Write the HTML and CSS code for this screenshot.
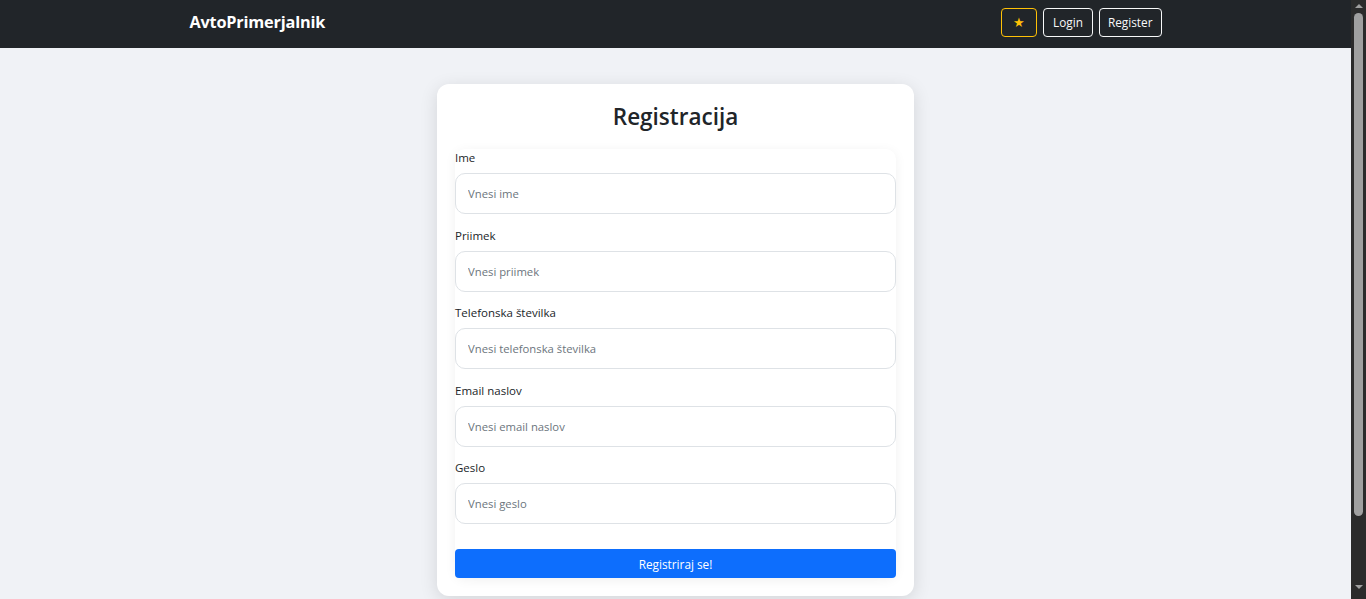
FILE: index.html
```html
<!DOCTYPE html>
<html lang="sl">
<head>
<meta charset="utf-8">
<title>Registracija</title>
<link rel="stylesheet" href="styles.css">
</head>
<body>
<div class="viewport">
  <nav class="navbar">
    <div class="nav-inner">
      <a class="brand" href="#">AvtoPrimerjalnik</a>
      <div class="nav-actions">
        <button class="btn btn-star" type="button">★</button>
        <button class="btn btn-light-outline btn-login" type="button">Login</button>
        <button class="btn btn-light-outline" type="button">Register</button>
      </div>
    </div>
  </nav>
  <main class="page">
    <section class="card">
      <h1 class="card-title">Registracija</h1>
      <form class="form">
        <div class="field">
          <label class="label" for="ime">Ime</label>
          <input class="input" id="ime" type="text" placeholder="Vnesi ime">
        </div>
        <div class="field">
          <label class="label" for="priimek">Priimek</label>
          <input class="input" id="priimek" type="text" placeholder="Vnesi priimek">
        </div>
        <div class="field">
          <label class="label" for="tel">Telefonska številka</label>
          <input class="input" id="tel" type="text" placeholder="Vnesi telefonska številka">
        </div>
        <div class="field">
          <label class="label" for="email">Email naslov</label>
          <input class="input" id="email" type="text" placeholder="Vnesi email naslov">
        </div>
        <div class="field">
          <label class="label" for="geslo">Geslo</label>
          <input class="input" id="geslo" type="password" placeholder="Vnesi geslo">
        </div>
        <button class="btn-submit" type="button">Registriraj se!</button>
      </form>
    </section>
  </main>
</div>
<div class="scrollbar" aria-hidden="true">
  <span class="sb-arrow sb-up"></span>
  <span class="sb-thumb"></span>
  <span class="sb-arrow sb-down"></span>
</div>
</body>
</html>
```
FILE: styles.css
```css
* { box-sizing: border-box; }
html, body { margin: 0; padding: 0; }
body {
  font-family: "Open Sans", "Noto Sans", sans-serif;
  background: #f0f2f6;
  color: #212529;
}
.viewport {
  margin-right: 15px;
}

/* decorative scrollbar (the reference shows the browser's) */
.scrollbar {
  position: fixed;
  top: 0;
  right: 0;
  width: 15px;
  height: 100vh;
  background: #2b2b2b;
  display: flex;
  flex-direction: column;
  align-items: center;
  padding: 2px 0 4px;
}
.sb-arrow {
  width: 0;
  height: 0;
  border-left: 4px solid transparent;
  border-right: 4px solid transparent;
}
.sb-up { border-bottom: 4px solid #9f9f9f; margin-top: 2px; }
.sb-down { border-top: 4px solid #9f9f9f; margin-top: auto; margin-bottom: 6px; }
.sb-thumb {
  width: 9px;
  height: 503px;
  margin-top: 5px;
  border-radius: 5px;
  background: #a0a0a0;
}

.navbar {
  background: #212529;
  height: 48px;
}
.nav-inner {
  max-width: 972px;
  margin: 0 auto;
  height: 48px;
  display: flex;
  align-items: center;
  justify-content: space-between;
}
.brand {
  color: #fff;
  text-decoration: none;
  font-weight: 700;
  font-size: 16.3px;
  letter-spacing: -0.2px;
  margin-top: -4px;
}
.nav-actions {
  display: flex;
  gap: 6px;
  margin-top: -4px;
}
.btn {
  font-family: inherit;
  height: 29px;
  background: transparent;
  border-radius: 4px;
  font-size: 11.8px;
  padding: 0 8px;
  cursor: pointer;
}
.btn-star {
  width: 36px;
  border: 1px solid #ffc107;
  color: #ffc107;
  font-size: 13px;
}
.btn-light-outline {
  border: 1px solid #f8f9fa;
  color: #f8f9fa;
}
.btn-login {
  width: 50px;
  padding: 0;
}

.page {
  display: flex;
  justify-content: center;
  padding: 36px 0 80px;
}
.card {
  width: 477px;
  background: #fff;
  border-radius: 12px;
  padding: 18px 18px 18px;
  box-shadow: 0 4px 18px rgba(0, 0, 0, 0.12);
}
.card-title {
  margin: 0 0 17px;
  text-align: center;
  font-size: 22.5px;
  font-weight: 600;
  line-height: 30px;
  color: #212529;
}
.form {
  display: flex;
  flex-direction: column;
  background: #fff;
  border-radius: 10px;
  box-shadow: 0 2px 12px rgba(0, 0, 0, 0.06);
}
.field {
  display: flex;
  flex-direction: column;
  margin-bottom: 12.5px;
}
.field:last-of-type { margin-bottom: 25px; }
.label {
  font-size: 11.5px;
  line-height: 18px;
  margin-bottom: 6px;
  color: #212529;
}
.input {
  font-family: inherit;
  height: 41px;
  border: 1px solid #dee2e6;
  border-radius: 10px;
  padding: 0 12px;
  font-size: 11.3px;
  color: #212529;
  background: #fff;
  outline: none;
}
.input::placeholder { color: #6c757d; }
.btn-submit {
  font-family: inherit;
  height: 29px;
  border: none;
  border-radius: 4px;
  background: #0d6efd;
  color: #fff;
  font-size: 11.8px;
  cursor: pointer;
}
```
